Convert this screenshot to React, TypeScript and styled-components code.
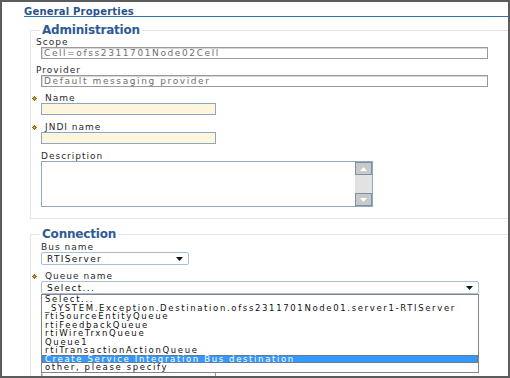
import styled, { createGlobalStyle } from "styled-components";

const GlobalStyle = createGlobalStyle`
  html, body {
    margin: 0;
    padding: 0;
    background: #fff;
  }
  body {
    font-family: "DejaVu Sans", Verdana, sans-serif;
  }
`;

const Frame = styled.div`
  width: 510px;
  height: 378px;
  box-sizing: border-box;
  border: 2px solid #5c5c5c;
  overflow: hidden;
  background: #fff;
`;

const Header = styled.div`
  margin: 4px 0 0 22px;
  padding-top: 1px;
  font-size: 10px;
  font-weight: bold;
  line-height: 9px;
  letter-spacing: 0.2px;
  color: #2a5292;
  border-bottom: 1px solid #3a70a8;
`;

const Section = styled.fieldset<{ $top: number; $bottom: number }>`
  margin: ${(p) => p.$top}px -12px 0 28px;
  padding: 0 0 ${(p) => p.$bottom}px 5px;
  border: 1px solid #e4e4e4;
  min-width: 0;
`;

const Legend = styled.legend`
  margin-left: 4px;
  padding: 0 2px;
  font-size: 12px;
  font-weight: bold;
  line-height: 13px;
  letter-spacing: -0.2px;
  color: #2f5a97;
`;

const Field = styled.div<{ $gap: number }>`
  position: relative;
  margin-top: ${(p) => p.$gap}px;
`;

const Label = styled.div<{ $indent?: number; $star?: boolean }>`
  display: flex;
  align-items: center;
  gap: 8px;
  height: 10px;
  margin-left: ${(p) => (p.$star ? -4 : p.$indent ?? 0)}px;
  font-size: 9px;
  line-height: 12px;
  letter-spacing: 1px;
  color: #2b2b2b;
`;

const TextInput = styled.input<{ $w: number; $required?: boolean }>`
  display: block;
  box-sizing: border-box;
  margin: 0 0 0 5px;
  width: ${(p) => p.$w}px;
  height: 12px;
  padding: 0 2px;
  border: 1px solid ${(p) => (p.$required ? "#8ea6c6" : "#9a9a9a")};
  box-shadow: ${(p) => (p.$required ? "none" : "inset 1px 1px 0 #d6d6d6")};
  background: ${(p) => (p.$required ? "#fdf5dc" : "#fff")};
  font-family: "DejaVu Sans", Verdana, sans-serif;
  font-size: 9px;
  letter-spacing: 1.6px;
  color: #6e6e6e;
  outline: none;
`;

const TextBox = styled.div`
  display: flex;
  box-sizing: border-box;
  margin-left: 5px;
  width: 332px;
  height: 46px;
  border: 1px solid #93a8c5;
`;

const Area = styled.textarea`
  flex: 1;
  border: 0;
  padding: 2px;
  resize: none;
  outline: none;
  overflow: hidden;
`;

const ScrollBar = styled.div`
  width: 17px;
  display: flex;
  flex-direction: column;
  justify-content: space-between;
  background: #e2e2e2;
`;

const ScrollButton = styled.div`
  height: 13px;
  box-sizing: border-box;
  border: 1px solid #7d8ea9;
  background: #c9c9c9;
  display: flex;
  align-items: center;
  justify-content: center;
`;

const Select = styled.div<{ $w: number }>`
  display: flex;
  align-items: center;
  justify-content: space-between;
  box-sizing: border-box;
  margin-left: 5px;
  width: ${(p) => p.$w}px;
  height: 13px;
  padding: 0 5px 0 5px;
  border: 1px solid #a9bfd9;
  border-radius: 2px;
  font-size: 9px;
  letter-spacing: 1.3px;
  color: #111;
`;

const List = styled.div`
  position: absolute;
  top: 100%;
  left: 5px;
  width: 438px;
  box-sizing: border-box;
  border: 1px solid #858585;
  background: #fff;
  z-index: 2;
`;

const Option = styled.div<{ $active?: boolean }>`
  height: 8.5px;
  padding-left: 3px;
  font-size: 8.5px;
  line-height: 8.5px;
  letter-spacing: 1.65px;
  white-space: nowrap;
  color: ${(p) => (p.$active ? "#fff" : "#111")};
  background: ${(p) => (p.$active ? "#3399ff" : "transparent")};
  box-shadow: ${(p) => (p.$active ? "inset 0 0 0 1px #6a7a90" : "none")};
`;

const Star = () => (
  <svg width="5" height="5" viewBox="0 0 10 10">
    <path d="M5 0v10M0 5h10M1.5 1.5l7 7M8.5 1.5l-7 7" stroke="#8a6a12" strokeWidth="2" />
    <circle cx="5" cy="5" r="1.6" fill="#e8c84a" />
  </svg>
);

const Arrow = () => (
  <svg width="7" height="4" viewBox="0 0 7 4">
    <path d="M0 0h7L3.5 4z" fill="#111" />
  </svg>
);

const ScrollArrow = ({ up }: { up?: boolean }) => (
  <svg width="7" height="4" viewBox="0 0 7 4">
    <path d={up ? "M0 4h7L3.5 0z" : "M0 0h7L3.5 4z"} fill="#fff" />
  </svg>
);

const queueOptions = [
  "Select...",
  "_SYSTEM.Exception.Destination.ofss2311701Node01.server1-RTIServer",
  "rtiSourceEntityQueue",
  "rtiFeedbackQueue",
  "rtiWireTrxnQueue",
  "Queue1",
  "rtiTransactionActionQueue",
  "Create Service Integration Bus destination",
  "other, please specify",
];

export default function App() {
  return (
    <>
      <GlobalStyle />
      <Frame>
        <Header>General Properties</Header>

        <Section $top={7} $bottom={11}>
          <Legend>Administration</Legend>
          <Field $gap={0}>
            <Label>Scope</Label>
            <TextInput $w={447} value="Cell=ofss2311701Node02Cell" readOnly disabled />
          </Field>
          <Field $gap={6}>
            <Label>Provider</Label>
            <TextInput $w={447} value="Default messaging provider" readOnly disabled />
          </Field>
          <Field $gap={6}>
            <Label $star>
              <Star />
              Name
            </Label>
            <TextInput $w={175} $required />
          </Field>
          <Field $gap={7}>
            <Label $star>
              <Star />
              JNDI name
            </Label>
            <TextInput $w={175} $required />
          </Field>
          <Field $gap={7}>
            <Label $indent={5}>Description</Label>
            <TextBox>
              <Area />
              <ScrollBar>
                <ScrollButton>
                  <ScrollArrow up />
                </ScrollButton>
                <ScrollButton>
                  <ScrollArrow />
                </ScrollButton>
              </ScrollBar>
            </TextBox>
          </Field>
        </Section>

        <Section $top={9} $bottom={0}>
          <Legend>Connection</Legend>
          <Field $gap={1}>
            <Label $indent={5}>Bus name</Label>
            <Select $w={148}>
              RTIServer
              <Arrow />
            </Select>
          </Field>
          <Field $gap={6}>
            <Label $star>
              <Star />
              Queue name
            </Label>
            <Field $gap={0}>
              <Select $w={438}>
                Select...
                <Arrow />
              </Select>
              <List>
                {queueOptions.map((o, i) => (
                  <Option key={o} $active={i === 7}>
                    {o}
                  </Option>
                ))}
              </List>
            </Field>
          </Field>
          {/* fields hidden under the open list; only their box edges peek out below it */}
          <Field $gap={17}>
            <TextInput $w={175} />
          </Field>
          <Field $gap={17}>
            <TextInput $w={175} />
          </Field>
          <Field $gap={17}>
            <TextInput $w={175} />
          </Field>
        </Section>
      </Frame>
    </>
  );
}
